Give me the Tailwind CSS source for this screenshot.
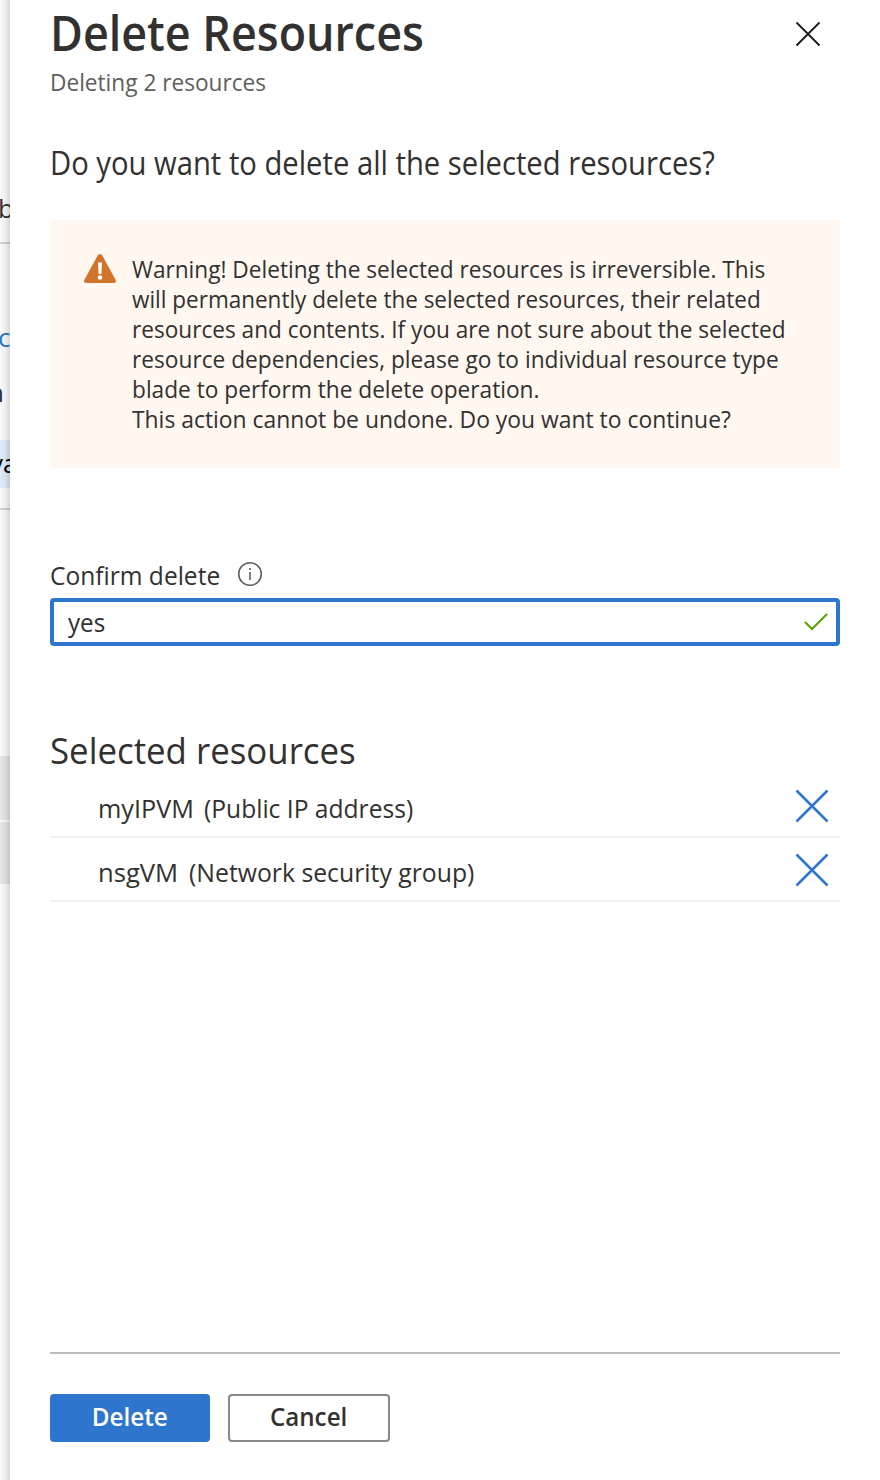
<!DOCTYPE html>
<html lang="en">
<head>
<meta charset="utf-8">
<title>Delete Resources</title>
<script src="https://cdn.jsdelivr.net/npm/@tailwindcss/browser@4"></script>
</head>
<body class="flex h-[1480px] w-[880px] overflow-hidden bg-white font-['Open_Sans',sans-serif] text-[#323130]">
<div class="relative h-full w-[10px] shrink-0 overflow-hidden bg-[#fafafa] text-[26px] leading-[36px]">
  <div class="flex h-[244px] flex-col justify-end border-b-2 border-[#cfcfcf] pb-[16px]"><span class="-ml-[2px]">b</span></div>
  <div class="mt-[75px] h-[36px] text-[#2e76cd]"><span class="-ml-[2px]">c</span></div>
  <div class="mt-[19px] h-[36px]"><span class="-ml-[12px]">n</span></div>
  <div class="mt-[30px] flex h-[48px] items-center bg-[#deecf9] pb-[2px] text-black"><span class="-ml-[10px]">va</span></div>
  <div class="mt-5 h-[2px] bg-[#cfcfcf]"></div>
  <div class="mt-[246px] h-[64px] bg-[#e6e5e3]"></div>
  <div class="mt-[2px] h-[62px] bg-[#e6e5e3]"></div>
  <div class="absolute inset-0 bg-linear-to-r from-black/0 via-black/4 to-black/15"></div>
</div>
<main class="flex h-full w-[870px] flex-col bg-white px-10">
  <header class="flex h-[98px] shrink-0 justify-between">
    <div>
      <h1 class="h-[66px] origin-left scale-x-[.9345] whitespace-nowrap text-[48px] font-semibold leading-[66px]">Delete Resources</h1>
      <p class="h-8 origin-left scale-x-[.943] whitespace-nowrap text-[24px] leading-[31px] text-[#605e5c]">Deleting 2 resources</p>
    </div>
    <svg class="mr-[19px] mt-[21px] size-[26px]" viewBox="0 0 26 26" fill="none" stroke="#1b1a19" stroke-width="1.8"><path d="M1.5 1.5 24.500 24.500M24.500 1.500 1.500 24.500"/></svg>
  </header>
  <h2 class="mt-[43px] h-[44px] origin-left scale-x-[.913] whitespace-nowrap text-[32px] leading-[44px]">Do you want to delete all the selected resources?</h2>
  <section class="mt-[35px] flex h-[248px] shrink-0 rounded-[4px] bg-[#fff7f0] pl-[33px] pt-[34px]">
    <svg class="h-[30px] w-[34px] shrink-0" viewBox="0 0 34 30"><path d="M14.700 1.500Q17-1.500 19.300 1.500L32.700 26Q33.500 29 31 29H3Q.5 29 1.300 26Z" fill="#d0752b"/><path d="M15 8.500H19L18.400 20H15.600Z" fill="#fff"/><circle cx="17" cy="23.500" r="2.300" fill="#fff"/></svg>
    <p class="ml-[15px] whitespace-nowrap text-[24px] leading-[30px]">
      <span class="block origin-left scale-x-[.943]">Warning! Deleting the selected resources is irreversible. This</span>
      <span class="block origin-left scale-x-[.937]">will permanently delete the selected resources, their related</span>
      <span class="block origin-left scale-x-[.942]">resources and contents. If you are not sure about the selected</span>
      <span class="block origin-left scale-x-[.946]">resource dependencies, please go to individual resource type</span>
      <span class="block origin-left scale-x-[.945]">blade to perform the delete operation.</span>
      <span class="block origin-left scale-x-[.953]">This action cannot be undone. Do you want to continue?</span>
    </p>
  </section>
  <div class="mt-[89px] flex h-[36px] shrink-0 items-center text-[26px] leading-[36px]">
    <span class="w-[187px] origin-left scale-x-[.944] whitespace-nowrap">Confirm delete</span>
    <svg class="-mt-[2px] size-[26px]" viewBox="0 0 26 26" fill="none" stroke="#605e5c" stroke-width="1.600"><circle cx="13" cy="13" r="11.300"/><path d="M13 11V19M13 7V9"/></svg>
  </div>
  <div class="mt-[5px] flex h-[48px] shrink-0 items-center justify-between rounded-[4px] border-4 border-[#2e76cd] pl-[14px] pr-[8px] text-[26px]">
    <span class="origin-left scale-x-[.93]">yes</span>
    <svg class="h-[20px] w-[24px]" viewBox="0 0 24 20" fill="none" stroke="#57a300" stroke-width="2"><path d="M1 10 8 17 23 2"/></svg>
  </div>
  <h3 class="mt-[78px] h-[52px] origin-left scale-x-[.941] whitespace-nowrap text-[37px] leading-[52px]">Selected resources</h3>
  <ul class="text-[26px] leading-[36px]">
    <li class="flex h-[62px] items-center justify-between border-b-2 border-[#f0f0f0] pb-[1px] pl-12 pr-[11px]">
      <span class="flex whitespace-nowrap pt-1"><span class="w-[105.500px] origin-left scale-x-[.97]">myIPVM</span><span class="origin-left scale-x-[.946]">(Public IP address)</span></span>
      <svg class="size-[34px]" viewBox="0 0 34 34" fill="none" stroke="#2e76cd" stroke-width="2.500"><path d="M1.500 1.500 32.500 32.500M32.500 1.500 1.500 32.500"/></svg></li>
    <li class="flex h-[64px] items-center justify-between border-b-2 border-[#f0f0f0] pl-12 pr-[11px] pt-[2px]">
      <span class="flex whitespace-nowrap pt-1"><span class="w-[90.500px] origin-left scale-x-[.985]">nsgVM</span><span class="origin-left scale-x-[.953]">(Network security group)</span></span>
      <svg class="size-[34px]" viewBox="0 0 34 34" fill="none" stroke="#2e76cd" stroke-width="2.500"><path d="M1.500 1.500 32.500 32.500M32.500 1.500 1.500 32.500"/></svg></li>
  </ul>
  <footer class="mb-[38px] mt-auto flex shrink-0 gap-[18px] border-t-2 border-[#bdbdbd] pt-10 text-[26px] font-semibold">
    <button class="h-[48px] w-[160px] rounded-[4px] bg-[#2e76cd] pb-1 text-white"><span class="inline-block scale-x-[.935]">Delete</span></button>
    <button class="h-[48px] w-[162px] rounded-[4px] border-2 border-[#8a8886] pb-1"><span class="inline-block scale-x-[.93]">Cancel</span></button>
  </footer>
</main>
</body>
</html>
